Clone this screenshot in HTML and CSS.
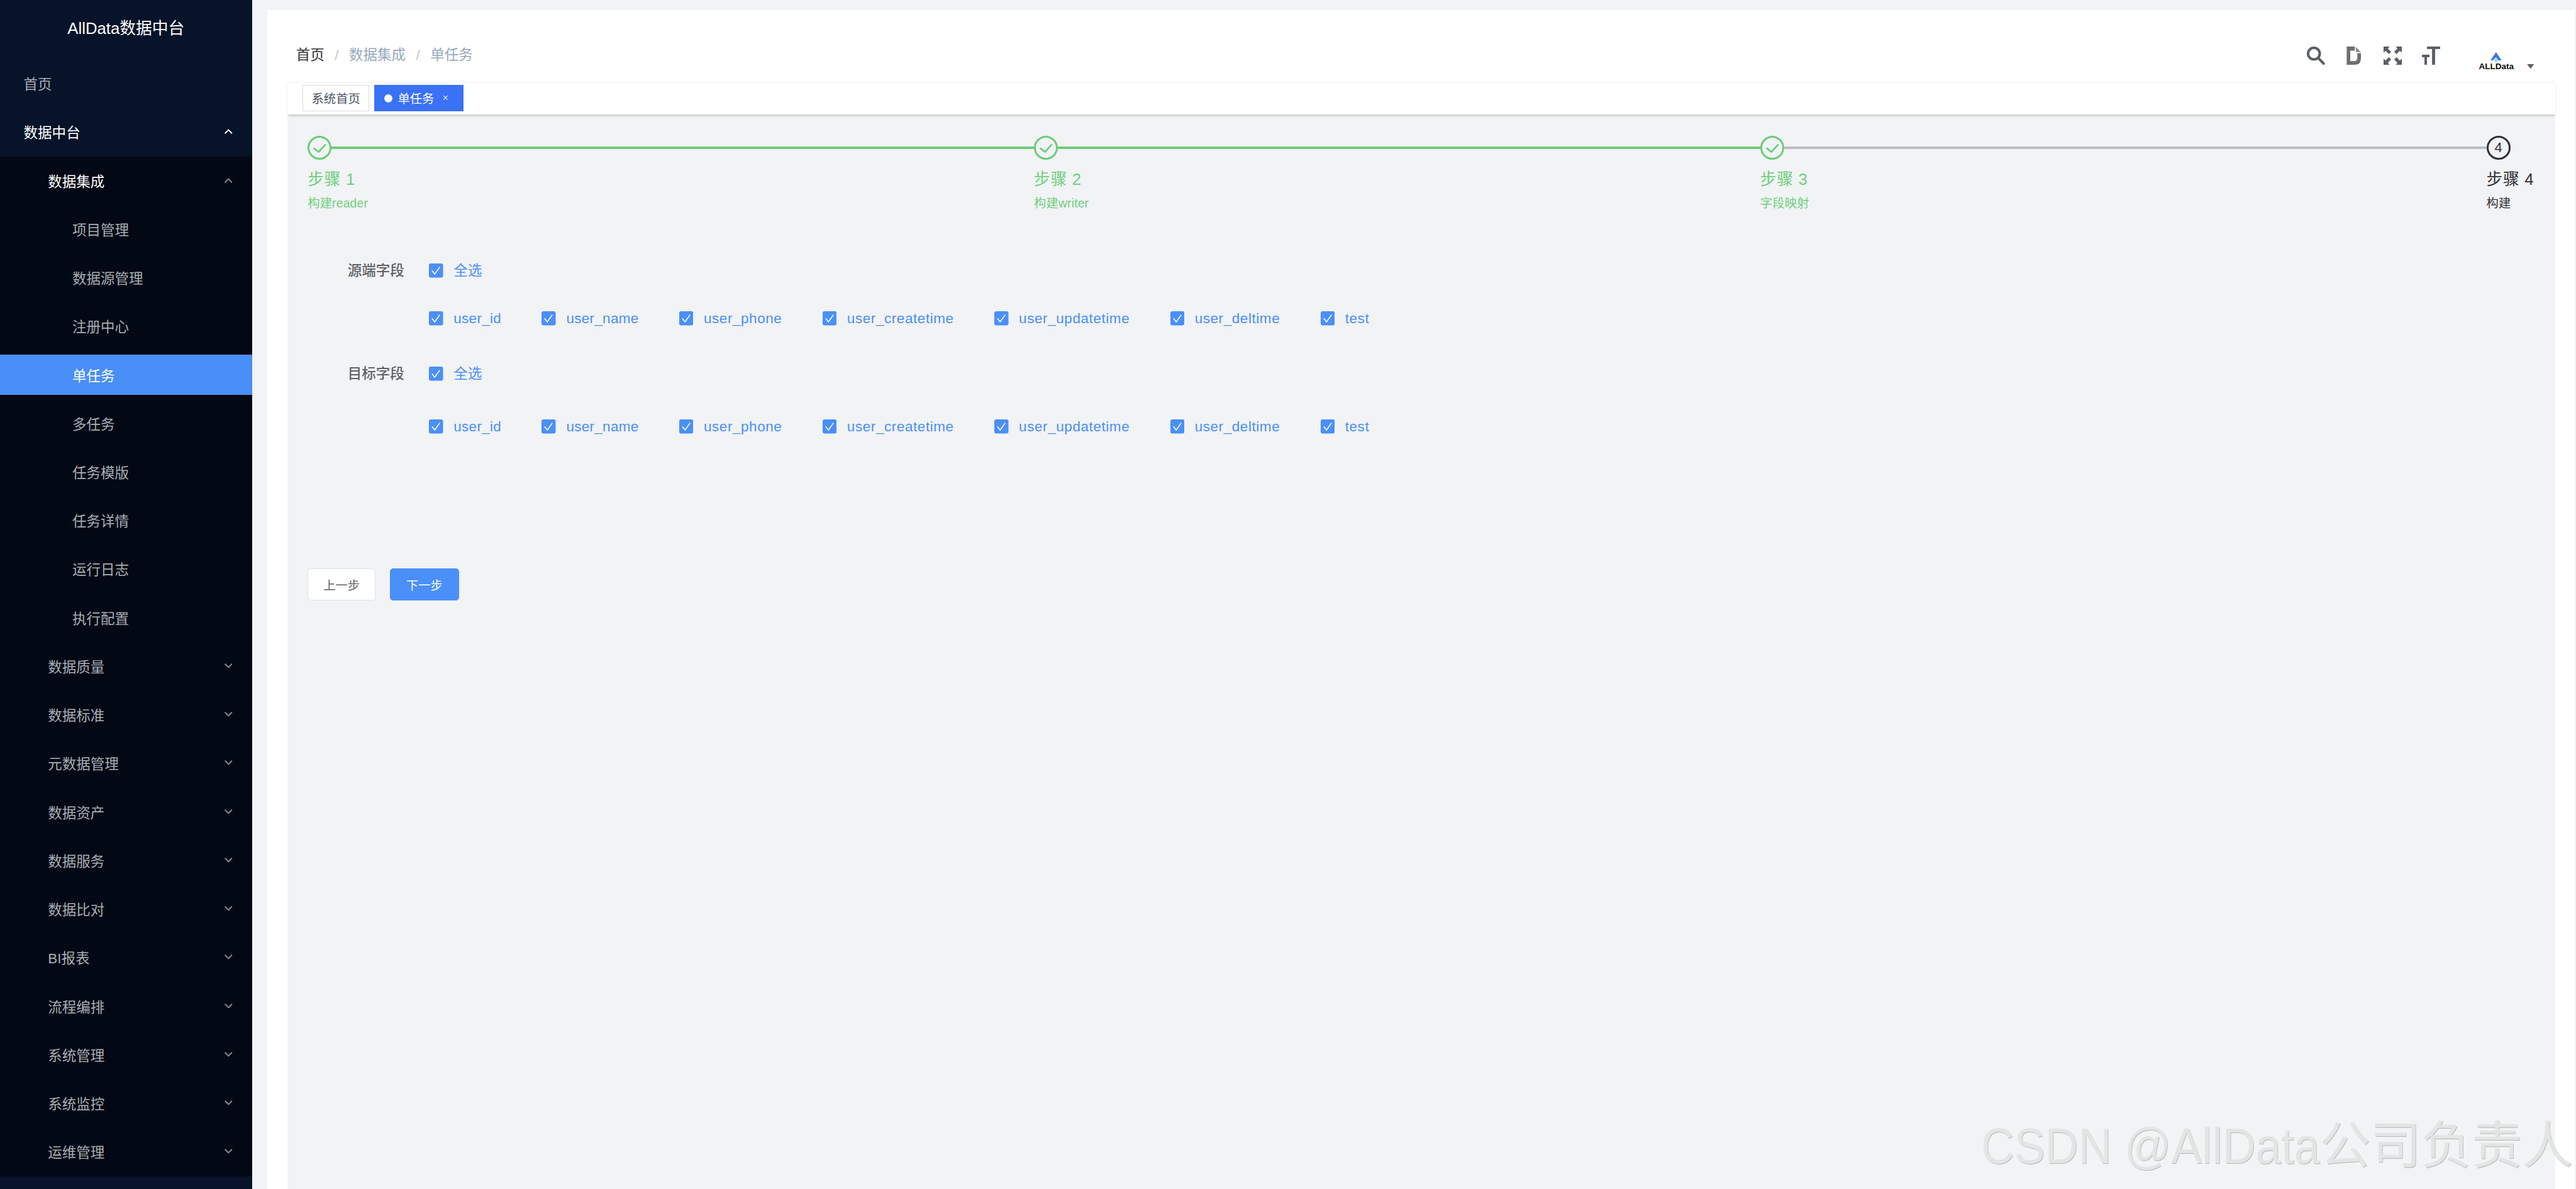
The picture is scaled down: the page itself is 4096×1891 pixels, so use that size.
FILE: index.html
```html
<!DOCTYPE html>
<html lang="zh-CN">
<head>
<meta charset="utf-8">
<title>AllData数据中台</title>
<link rel="stylesheet" href="styles.css">
</head>
<body>
<div class="app">
  <aside class="sidebar">
    <div class="logo">AllData数据中台</div>
    <div class="row lv1 dim">首页</div>
    <div class="row lv1 on">数据中台<svg class="chev" viewBox="0 0 18 10"><path d="M2 9 9 2l7 7"/></svg></div>
    <div class="submenu">
      <div class="row lv2 on">数据集成<svg class="chev faint" viewBox="0 0 18 10"><path d="M2 9 9 2l7 7"/></svg></div>
      <div class="row lv3 dim">项目管理</div>
      <div class="row lv3 dim">数据源管理</div>
      <div class="row lv3 dim">注册中心</div>
      <div class="row lv3 active">单任务</div>
      <div class="row lv3 dim">多任务</div>
      <div class="row lv3 dim">任务模版</div>
      <div class="row lv3 dim">任务详情</div>
      <div class="row lv3 dim">运行日志</div>
      <div class="row lv3 dim">执行配置</div>
      <div class="row lv2 dim">数据质量<svg class="chev faint" viewBox="0 0 18 10"><path d="M2 1l7 7 7-7"/></svg></div>
      <div class="row lv2 dim">数据标准<svg class="chev faint" viewBox="0 0 18 10"><path d="M2 1l7 7 7-7"/></svg></div>
      <div class="row lv2 dim">元数据管理<svg class="chev faint" viewBox="0 0 18 10"><path d="M2 1l7 7 7-7"/></svg></div>
      <div class="row lv2 dim">数据资产<svg class="chev faint" viewBox="0 0 18 10"><path d="M2 1l7 7 7-7"/></svg></div>
      <div class="row lv2 dim">数据服务<svg class="chev faint" viewBox="0 0 18 10"><path d="M2 1l7 7 7-7"/></svg></div>
      <div class="row lv2 dim">数据比对<svg class="chev faint" viewBox="0 0 18 10"><path d="M2 1l7 7 7-7"/></svg></div>
      <div class="row lv2 dim">BI报表<svg class="chev faint" viewBox="0 0 18 10"><path d="M2 1l7 7 7-7"/></svg></div>
      <div class="row lv2 dim">流程编排<svg class="chev faint" viewBox="0 0 18 10"><path d="M2 1l7 7 7-7"/></svg></div>
      <div class="row lv2 dim">系统管理<svg class="chev faint" viewBox="0 0 18 10"><path d="M2 1l7 7 7-7"/></svg></div>
      <div class="row lv2 dim">系统监控<svg class="chev faint" viewBox="0 0 18 10"><path d="M2 1l7 7 7-7"/></svg></div>
      <div class="row lv2 dim">运维管理<svg class="chev faint" viewBox="0 0 18 10"><path d="M2 1l7 7 7-7"/></svg></div>
    </div>
  </aside>

  <main class="panel">
    <header class="navbar">
      <nav class="crumbs">
        <span class="crumb-home">首页</span><span class="sep">/</span><span>数据集成</span><span class="sep">/</span><span>单任务</span>
      </nav>
      <div class="tools">
        <svg class="icon" viewBox="0 0 36 36"><circle cx="14" cy="14" r="11.5" class="ic-stroke"/><path d="M23 23l10 10.5" class="ic-stroke round"/></svg>
        <svg class="icon" viewBox="0 0 36 36"><path class="ic-doc" d="M3 0H19V8H10V29H17Q24 29 24 22V13H31V24Q31 36 19 36H3Z"/><path class="ic-fold" d="M21 1 31 11H21Z"/></svg>
        <svg class="icon" viewBox="0 0 36 36"><path class="ic-fill" d="M0 0H12L8.500 4 15 10.500 10.500 15 4 8.500 0 12ZM36 0V12L32 8.500 25.500 15 21 10.500 27.500 4 24 0ZM0 36V24L4 27.500 10.500 21 15 25.500 8.500 32 12 36ZM36 36H24L27.500 32 21 25.500 25.500 21 32 27.500 36 24Z"/></svg>
        <svg class="icon" viewBox="0 0 36 36"><path class="ic-fill" d="M10 0H36V5H26V36H20V5H10ZM0 16H15V21H10V36H5V21H0Z"/></svg>
        <div class="brand">
          <div class="brand-mark">
            <svg class="brand-svg" viewBox="0 0 22 21"><path class="mark-a" d="M11 0 22 16H15.500L11 10 5 16H0Z"/><path class="mark-b" d="M11 12 14 16 11 21 8 16Z"/></svg>
            <span class="brand-text">ALLData</span>
          </div>
          <svg class="caret" viewBox="0 0 14 9"><path class="ic-fill" d="M0 0H14L7 9Z"/></svg>
        </div>
      </div>
    </header>

    <div class="tagbar">
      <span class="tag">系统首页</span>
      <span class="tag tag-on"><i class="dot"></i>单任务<span class="tag-x">×</span></span>
    </div>

    <section class="content">
      <div class="steps">
        <div class="step done">
          <div class="step-head"><span class="circle"><svg class="tick" viewBox="0 0 40 40"><path d="M9.300 21.300l9 7 13-14"/></svg></span><span class="line"></span></div>
          <div class="step-title">步骤 1</div>
          <div class="step-desc">构建reader</div>
        </div>
        <div class="step done">
          <div class="step-head"><span class="circle"><svg class="tick" viewBox="0 0 40 40"><path d="M9.300 21.300l9 7 13-14"/></svg></span><span class="line"></span></div>
          <div class="step-title">步骤 2</div>
          <div class="step-desc">构建writer</div>
        </div>
        <div class="step done pending-line">
          <div class="step-head"><span class="circle"><svg class="tick" viewBox="0 0 40 40"><path d="M9.300 21.300l9 7 13-14"/></svg></span><span class="line"></span></div>
          <div class="step-title">步骤 3</div>
          <div class="step-desc">字段映射</div>
        </div>
        <div class="step last">
          <div class="step-head"><span class="circle">4</span></div>
          <div class="step-title">步骤 4</div>
          <div class="step-desc">构建</div>
        </div>
      </div>

      <form class="form">
        <div class="form-item source">
          <div class="form-label">源端字段</div>
          <div class="form-lines">
            <div class="checks"><label class="check"><svg class="box" viewBox="0 0 28 28"><rect width="28" height="28" rx="4"/><path d="M6 14l5.500 7L21.500 7"/></svg>全选</label></div>
            <div class="checks">
              <label class="check"><svg class="box" viewBox="0 0 28 28"><rect width="28" height="28" rx="4"/><path d="M6 14l5.500 7L21.500 7"/></svg>user_id</label>
              <label class="check"><svg class="box" viewBox="0 0 28 28"><rect width="28" height="28" rx="4"/><path d="M6 14l5.500 7L21.500 7"/></svg>user_name</label>
              <label class="check wide"><svg class="box" viewBox="0 0 28 28"><rect width="28" height="28" rx="4"/><path d="M6 14l5.500 7L21.500 7"/></svg>user_phone</label>
              <label class="check wide"><svg class="box" viewBox="0 0 28 28"><rect width="28" height="28" rx="4"/><path d="M6 14l5.500 7L21.500 7"/></svg>user_createtime</label>
              <label class="check wide"><svg class="box" viewBox="0 0 28 28"><rect width="28" height="28" rx="4"/><path d="M6 14l5.500 7L21.500 7"/></svg>user_updatetime</label>
              <label class="check wide"><svg class="box" viewBox="0 0 28 28"><rect width="28" height="28" rx="4"/><path d="M6 14l5.500 7L21.500 7"/></svg>user_deltime</label>
              <label class="check wide"><svg class="box" viewBox="0 0 28 28"><rect width="28" height="28" rx="4"/><path d="M6 14l5.500 7L21.500 7"/></svg>test</label>
            </div>
          </div>
        </div>
        <div class="form-item target">
          <div class="form-label">目标字段</div>
          <div class="form-lines">
            <div class="checks"><label class="check"><svg class="box" viewBox="0 0 28 28"><rect width="28" height="28" rx="4"/><path d="M6 14l5.500 7L21.500 7"/></svg>全选</label></div>
            <div class="checks">
              <label class="check"><svg class="box" viewBox="0 0 28 28"><rect width="28" height="28" rx="4"/><path d="M6 14l5.500 7L21.500 7"/></svg>user_id</label>
              <label class="check"><svg class="box" viewBox="0 0 28 28"><rect width="28" height="28" rx="4"/><path d="M6 14l5.500 7L21.500 7"/></svg>user_name</label>
              <label class="check wide"><svg class="box" viewBox="0 0 28 28"><rect width="28" height="28" rx="4"/><path d="M6 14l5.500 7L21.500 7"/></svg>user_phone</label>
              <label class="check wide"><svg class="box" viewBox="0 0 28 28"><rect width="28" height="28" rx="4"/><path d="M6 14l5.500 7L21.500 7"/></svg>user_createtime</label>
              <label class="check wide"><svg class="box" viewBox="0 0 28 28"><rect width="28" height="28" rx="4"/><path d="M6 14l5.500 7L21.500 7"/></svg>user_updatetime</label>
              <label class="check wide"><svg class="box" viewBox="0 0 28 28"><rect width="28" height="28" rx="4"/><path d="M6 14l5.500 7L21.500 7"/></svg>user_deltime</label>
              <label class="check wide"><svg class="box" viewBox="0 0 28 28"><rect width="28" height="28" rx="4"/><path d="M6 14l5.500 7L21.500 7"/></svg>test</label>
            </div>
          </div>
        </div>
        <div class="actions">
          <span class="btn">上一步</span>
          <span class="btn btn-primary">下一步</span>
        </div>
      </form>
    </section>
  </main>
</div>
<div class="watermark"><span class="wm-latin">CSDN @AllData</span>公司负责人</div>
</body>
</html>
```

FILE: styles.css
```css
* { box-sizing: border-box; }
html, body {
  margin: 0;
  height: 1891px;
  overflow: hidden;
  background: #f1f3f5;
  font-family: "Liberation Sans", "Noto Sans CJK SC", sans-serif;
}
.app {
  display: flex;
  height: 1891px;
}

/* sidebar */
.sidebar {
  width: 400.7px;
  flex: none;
  height: 100%;
  background: #061329;
  overflow: hidden;
}
.logo {
  height: 94.15px;
  padding-bottom: 9px;
  display: flex;
  align-items: center;
  justify-content: center;
  color: #fff;
  font-size: 25.75px;
}
.row {
  height: 77.25px;
  display: flex;
  align-items: center;
  justify-content: space-between;
  padding-right: 29.8px;
  padding-bottom: 1.5px;
  font-size: 22.53px;
}
.lv1 { padding-left: 37.6px; }
.lv2 { padding-left: 76.25px; }
.lv3 { padding-left: 114.9px; }
.on { color: #fff; }
.dim { color: #a9aeb4; }
.active {
  height: 64.45px;
  margin: 6.4px 0;
  background: #4a8ff7;
  color: #fff;
}
.submenu { background: #020814; }
.chev {
  width: 14.5px;
  height: 8px;
  fill: none;
  stroke: #fff;
  stroke-width: 2.6;
}
.chev.faint { stroke: #868b90; }

/* main panel */
.panel {
  flex: 1;
  margin: 16.1px 1.6px 0 24.1px;
  background: #fff;
  display: flex;
  flex-direction: column;
  min-width: 0;
}
.navbar {
  height: 112.7px;
  flex: none;
  padding: 32.2px 65.2px 0 45.9px;
  display: flex;
  align-items: center;
  justify-content: space-between;
}
.crumbs {
  display: flex;
  align-items: center;
  font-size: 22.53px;
  line-height: 30px;
  margin-top: -1px;
  color: #97a8be;
}
.crumb-home { color: #303133; }
.sep {
  margin: 0 16.5px;
  color: #c0c4cc;
}
.tools {
  display: flex;
  align-items: center;
  gap: 32.2px;
}
.icon { width: 29px; height: 29px; display: block; }
.ic-fill { fill: #5a5e66; }
.ic-doc { fill: #6e6e6e; }
.ic-fold { fill: #8a8a8a; }
.ic-stroke { fill: none; stroke: #5a5e66; stroke-width: 5; }
.round { stroke-linecap: round; }
.brand {
  display: flex;
  align-items: flex-end;
  gap: 20.9px;
  margin: 16px 0 0 29px;
}
.brand-mark {
  display: flex;
  flex-direction: column;
  align-items: center;
  width: 55.5px;
}
.brand-svg { width: 17.7px; height: 17px; display: block; }
.mark-a { fill: #3a74ea; }
.mark-b { fill: #7fd0f8; }
.brand-text {
  font-size: 13.5px;
  line-height: 11px;
  font-weight: 700;
  color: #0a0a0a;
  white-space: nowrap;
}
.caret { width: 11.3px; height: 7.2px; display: block; margin-bottom: 1.5px; }

/* tags */
.tagbar {
  height: 53.1px;
  flex: none;
  margin: 0 31.4px 0 32.2px;
  padding: 6.4px 0 0 24.1px;
  display: flex;
  gap: 8px;
  background: #fff;
  box-shadow: 0 3px 4px -1px rgba(0, 0, 0, .2), inset 0 3px 3px -1px rgba(0, 0, 0, .035);
  position: relative;
}
.tag {
  height: 41.8px;
  display: flex;
  align-items: center;
  justify-content: center;
  width: 106.2px;
  border: 1.6px solid #d8dce5;
  font-size: 19.3px;
  color: #495060;
}
.tag-on {
  width: 141.6px;
  background: #3a71f5;
  border-color: #3a71f5;
  color: #fff;
  justify-content: flex-start;
  padding-left: 14.4px;
}
.dot {
  width: 12.9px;
  height: 12.9px;
  border-radius: 50%;
  background: #fff;
  margin-right: 9px;
  flex: none;
}
.tag-x {
  font-size: 16px;
  margin-left: 13px;
  color: #d5e0fb;
}

/* content */
.content {
  flex: 1;
  margin: 0 31.4px 0 32.2px;
  padding: 33.8px 0 0 32.2px;
  background: #f1f3f5;
}
.steps { display: flex; }
.step { width: 1154.8px; flex: none; color: #6fcf7d; }
.step.last { width: auto; color: #303133; }
.step-head {
  display: flex;
  align-items: center;
  height: 38px;
}
.circle {
  width: 38px;
  height: 38px;
  border-radius: 50%;
  border: 3.2px solid #303133;
  display: flex;
  align-items: center;
  justify-content: center;
  flex: none;
  font-size: 22px;
  color: #303133;
}
.done .circle { border-color: #6bcb79; }
.tick {
  width: 32px;
  height: 32px;
  fill: none;
  stroke: #6bcb79;
  stroke-width: 3.4;
  stroke-linecap: round;
  stroke-linejoin: round;
}
.line {
  flex: 1;
  height: 4px;
  background: #6bcb79;
}
.pending-line .line { background: #bcc0c5; }
.step-title {
  font-size: 25.75px;
  line-height: 46.3px;
  margin-top: 8.6px;
  margin-bottom: -1px;
  white-space: nowrap;
  letter-spacing: .7px;
}
.step-desc {
  font-size: 19.3px;
  line-height: 32.2px;
  white-space: nowrap;
  letter-spacing: .2px;
}

/* form */
.form { margin-top: 68.4px; }
.form-item { display: flex; }
.form-label {
  width: 193.1px;
  padding-right: 39.4px;
  text-align: right;
  font-size: 22.53px;
  line-height: 45px;
  color: #606266;
  font-weight: 500;
  flex: none;
}
.form-lines { display: flex; flex-direction: column; }
.source .form-lines { gap: 30.6px; }
.target .form-lines { gap: 38.6px; }
.target { margin-top: 43.5px; }
.checks {
  display: flex;
  gap: 64.4px;
  height: 45px;
  align-items: center;
}
.check {
  display: flex;
  align-items: center;
  font-size: 22.53px;
  line-height: 45px;
  color: #4b8ff8;
  letter-spacing: .27px;
  white-space: nowrap;
}
.check.wide { letter-spacing: .56px; }
.box { width: 22.53px; height: 22.53px; margin-right: 16.5px; flex: none; }
.box rect { fill: #4b8ff8; }
.box path { fill: none; stroke: #fff; stroke-width: 2; }

.actions {
  display: flex;
  gap: 23.3px;
  margin-top: 203.6px;
}
.btn {
  width: 107.8px;
  height: 50.7px;
  display: flex;
  align-items: center;
  justify-content: center;
  border: 1.6px solid #dfe2e7;
  border-radius: 5px;
  background: #fff;
  color: #606266;
  font-size: 19.3px;
}
.btn-primary {
  width: 109.4px;
  background: #4b8ff8;
  border-color: #4b8ff8;
  color: #fff;
}

/* watermark laid over the page */
.watermark {
  position: absolute;
  left: 3150px;
  top: 1772px;
  width: 946px;
  overflow: hidden;
  font-size: 80.5px;
  line-height: 100px;
  white-space: nowrap;
  color: #e3e4e4;
  text-shadow: .8px .8px 0 #b4b6b7;
}
.wm-latin {
  display: inline-block;
  transform: scaleX(.91);
  transform-origin: left center;
  margin-right: -53px;
}
```
